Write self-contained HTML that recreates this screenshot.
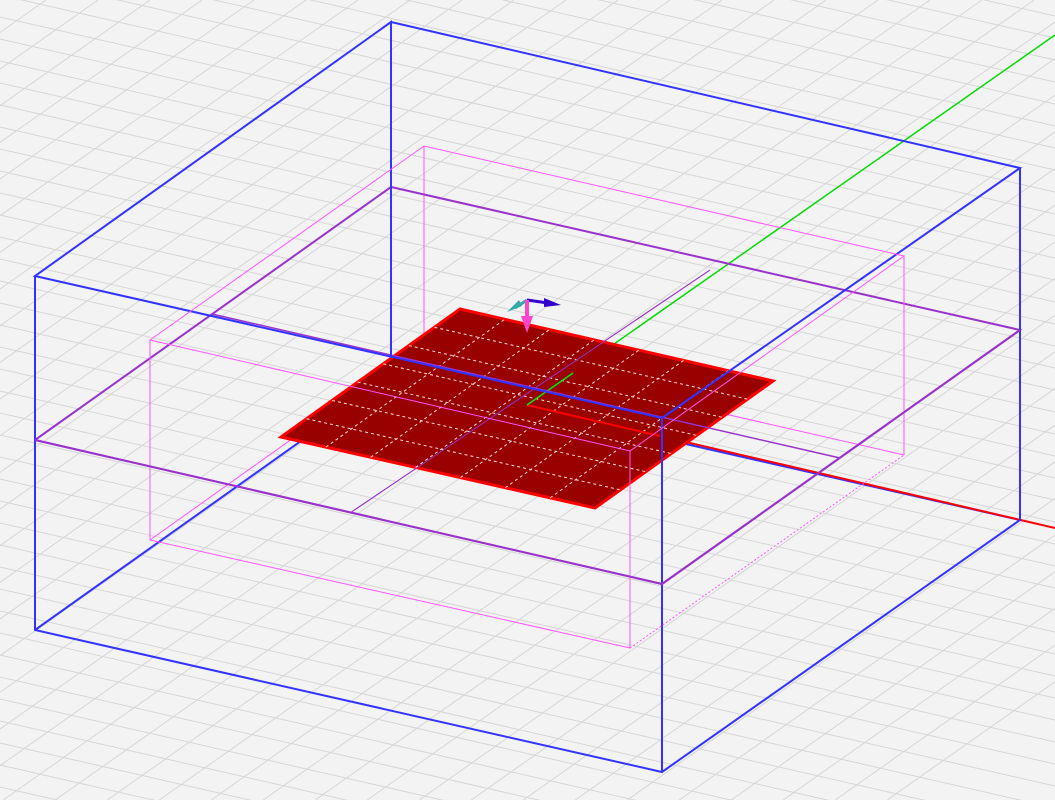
<!DOCTYPE html>
<html><head><meta charset="utf-8"><style>html,body{margin:0;padding:0;background:#f3f3f3;overflow:hidden;width:1055px;height:800px}svg{display:block}</style></head>
<body>
<svg id="s" width="1055" height="800" viewBox="0 0 1055 800" xmlns="http://www.w3.org/2000/svg">
<rect width="1055" height="800" fill="#f3f3f3"/>
<g id="grid" stroke="#d6d6d6" stroke-width="1"></g>
<!-- hidden / back lines -->
<line x1="391" y1="377" x2="1020" y2="520" stroke="#3333ff" stroke-width="2"/>
<line x1="391" y1="377" x2="35" y2="630" stroke="#3333ff" stroke-width="2"/>
<line x1="424" y1="146" x2="424" y2="345" stroke="#ff55ff" stroke-width="1"/>
<line x1="424" y1="345" x2="904" y2="455" stroke="#ff55ff" stroke-width="1"/>
<line x1="424" y1="345" x2="150" y2="540" stroke="#ff55ff" stroke-width="1"/>
<line x1="350" y1="513" x2="710" y2="270" stroke="#9933cc" stroke-width="1"/>
<!-- axes -->
<line x1="527" y1="405" x2="1055" y2="528" stroke="#ff0000" stroke-width="2"/>
<line x1="527" y1="405" x2="1055" y2="35" stroke="#00dd00" stroke-width="1.5"/>
<!-- purple plane -->
<polyline points="35,440 391,187 1020,330 662,584 35,440" fill="none" stroke="#9933cc" stroke-width="2"/>
<!-- plate -->
<polygon points="460,309 773,381 595,508 281,437" fill="#990000" stroke="#ff0000" stroke-width="3"/>
<g id="pg" stroke="#ffdddd" stroke-width="1" stroke-dasharray="3,3"></g>
<line x1="527" y1="405" x2="660" y2="436" stroke="#ff0000" stroke-width="2"/>
<line x1="527" y1="405" x2="573" y2="373" stroke="#00ee00" stroke-width="1.5"/>
<line x1="350" y1="513" x2="710" y2="270" stroke="#9933cc" stroke-width="1"/>
<line x1="212" y1="314" x2="840" y2="458" stroke="#9933cc" stroke-width="1.5"/>
<!-- blue box -->
<polyline points="391,358 391,22 35,276 662,418 1020,168 391,22" fill="none" stroke="#3333ff" stroke-width="2"/>
<polyline points="35,276 35,630 662,772 1020,520 1020,168" fill="none" stroke="#3333ff" stroke-width="2"/>
<line x1="662" y1="418" x2="662" y2="772" stroke="#3333ff" stroke-width="2"/>
<!-- magenta box -->
<polyline points="150,340 424,146 904,256 630,451 150,340 150,540 630,648 630,451" fill="none" stroke="#ff55ff" stroke-width="1"/>
<line x1="904" y1="256" x2="904" y2="455" stroke="#ff55ff" stroke-width="1"/>
<line x1="630" y1="648" x2="904" y2="455" stroke="#ff55ff" stroke-width="1" stroke-dasharray="2,2"/>
<!-- purple front edges over -->
<polyline points="35,440 662,584 1020,330" fill="none" stroke="#9933cc" stroke-width="2"/>
<!-- gizmo -->
<line x1="527" y1="300" x2="515" y2="308" stroke="#33aaaa" stroke-width="3"/>
<polygon points="507,312 519,300 522,306" fill="#33aaaa"/>
<line x1="527" y1="300" x2="548" y2="303" stroke="#3300cc" stroke-width="3"/>
<polygon points="544,298 561,305 544,307" fill="#3300cc"/>
<line x1="527" y1="300" x2="527" y2="318" stroke="#ff44cc" stroke-width="4"/>
<polygon points="521,316 533,316 527,333" fill="#ff44cc"/>
</svg>
<script>
(function(){
var ns="http://www.w3.org/2000/svg",g=document.getElementById("grid");
function L(p,x1,y1,x2,y2,w){var l=document.createElementNS(ns,"line");l.setAttribute("x1",x1);l.setAttribute("y1",y1);l.setAttribute("x2",x2);l.setAttribute("y2",y2);if(w)l.setAttribute("stroke-width",w);p.appendChild(l);}
var a=0.2285;
for(var b=-400;b<900;b+=22){L(g,0,b+21,1055,b+21+1055*a);}
var s=0.705;
for(var c=-1200;c<2000;c+=52){L(g,c+50,0,c+50-800/s,800);}
var pg=document.getElementById("pg");
var A=[281,437],B=[595,508],C=[773,381],D=[460,309],n=7;
for(var i=1;i<n;i++){var t=i/n;
L(pg,A[0]+(B[0]-A[0])*t,A[1]+(B[1]-A[1])*t,D[0]+(C[0]-D[0])*t,D[1]+(C[1]-D[1])*t);
L(pg,A[0]+(D[0]-A[0])*t,A[1]+(D[1]-A[1])*t,B[0]+(C[0]-B[0])*t,B[1]+(C[1]-B[1])*t);}
})();
</script>
</body></html>
